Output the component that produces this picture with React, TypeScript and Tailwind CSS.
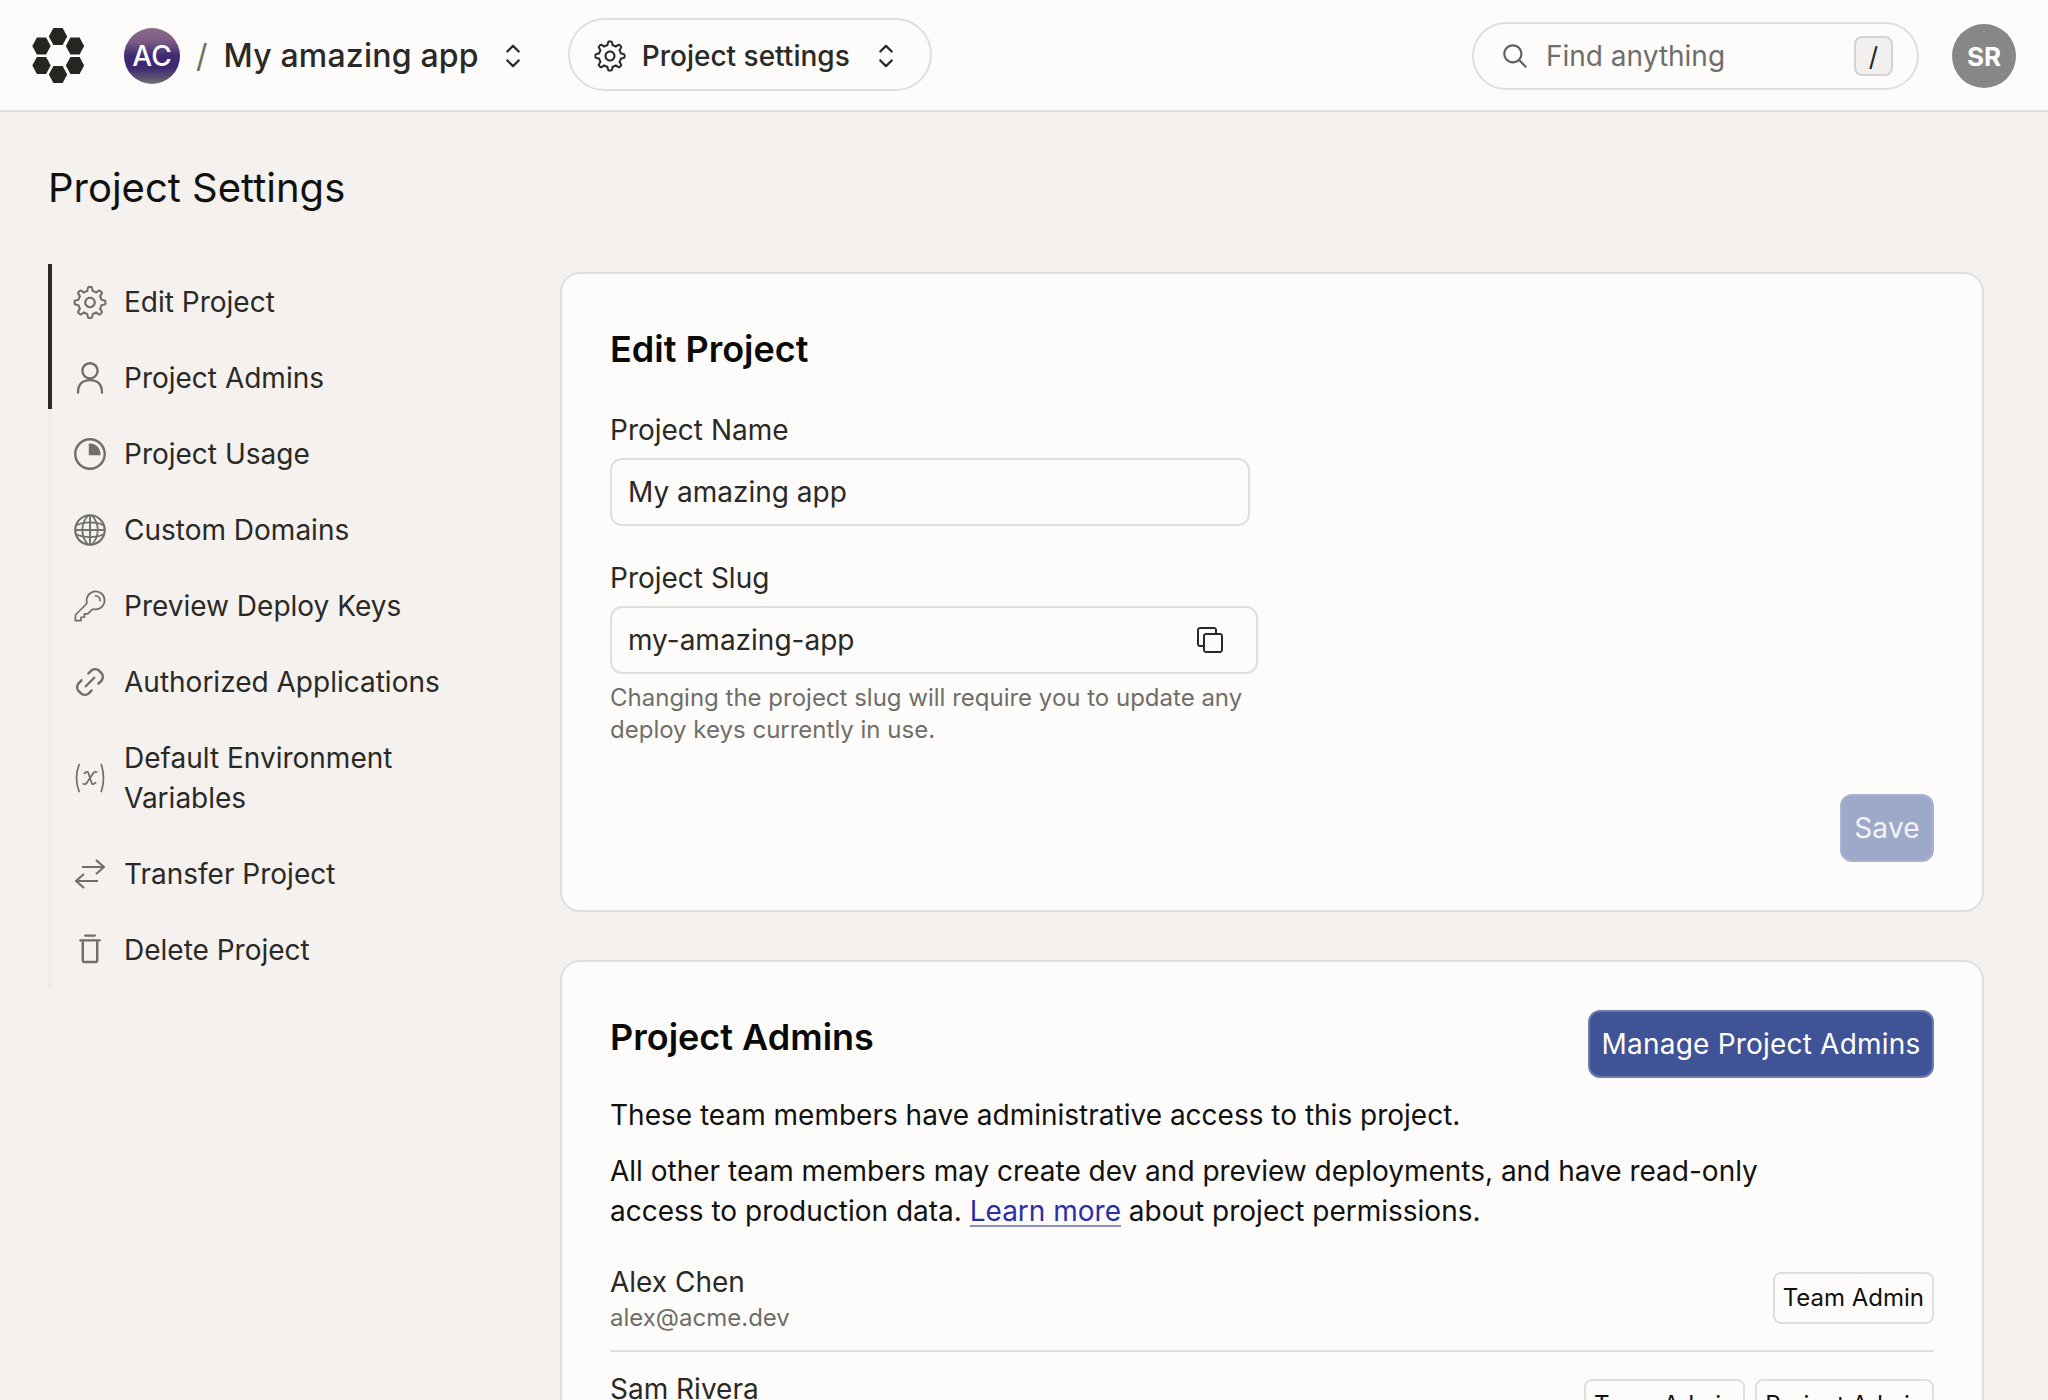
import React from "react";
import { RxGear, RxPerson, RxPieChart, RxGlobe, RxLink2, RxCaretSort, RxMagnifyingGlass, RxCopy, RxTrash } from "react-icons/rx";
import { HiOutlineVariable } from "react-icons/hi2";

function Logo() {
  const hex = [
    [58, 36.5],
    [41.5, 46],
    [75, 46],
    [41.5, 65.5],
    [75, 65.5],
    [58, 74.5],
  ];
  return (
    <svg width="52" height="56" viewBox="32 28 52 56" className="shrink-0">
      {hex.map(([x, y]) => (
        <polygon
          key={`${x}-${y}`}
          fill="#262522"
          points={`${x - 9.2},${y} ${x - 4.6},${y - 8.5} ${x + 4.6},${y - 8.5} ${x + 9.2},${y} ${x + 4.6},${y + 8.5} ${x - 4.6},${y + 8.5}`}
        />
      ))}
    </svg>
  );
}

function KeyIcon() {
  return (
    <svg width="40" height="40" viewBox="0 0 24 24" fill="none" stroke="currentColor" strokeWidth="1.15" strokeLinecap="round" strokeLinejoin="round">
      <path d="M15.75 5.25a3 3 0 0 1 3 3m3 0a6 6 0 0 1-7.029 5.912c-.563-.097-1.159.026-1.563.43L10.5 17.25H8.25v2.25H6v2.25H2.25v-2.818c0-.597.237-1.17.659-1.591l6.499-6.499c.404-.404.527-1 .43-1.563A6 6 0 1 1 21.75 8.25Z" />
    </svg>
  );
}

function TransferIcon() {
  return (
    <svg width="30" height="30" viewBox="0 0 30 30" fill="none" stroke="currentColor" strokeWidth="2.2">
      <path d="M7 8 H29 M21 1 L29 8 L21 15" />
      <path d="M23 22 H1 M9 15 L1 22 L9 29" />
    </svg>
  );
}

const items: { label: string; icon: React.ReactNode }[] = [
  { label: "Edit Project", icon: <RxGear size={37} /> },
  { label: "Project Admins", icon: <RxPerson size={36} /> },
  { label: "Project Usage", icon: <RxPieChart size={36} /> },
  { label: "Custom Domains", icon: <RxGlobe size={36} /> },
  { label: "Preview Deploy Keys", icon: <KeyIcon /> },
  { label: "Authorized Applications", icon: <RxLink2 size={36} /> },
  { label: "Default Environment Variables", icon: <HiOutlineVariable size={38} strokeWidth={1.15} /> },
  { label: "Transfer Project", icon: <TransferIcon /> },
  { label: "Delete Project", icon: <RxTrash size={36} /> },
];

function Sidebar() {
  return (
    <nav className="relative w-[452px] shrink-0 h-fit border-l-4 border-[#eeedea]">
      <div className="absolute -left-[4px] top-0 w-[4px] h-[145px] bg-[#2a2925]" />
      {items.map((it) => (
        <div key={it.label} className="flex items-center gap-[16px] pl-[20px] pr-[50px] py-[18px] text-[28px] leading-[40px] text-[#2a2925]">
          <span className="w-[36px] h-[36px] shrink-0 flex items-center justify-center text-[#6f6e69]">{it.icon}</span>
          <span>{it.label}</span>
        </div>
      ))}
    </nav>
  );
}

function Badge({ children }: { children: React.ReactNode }) {
  return (
    <span className="flex items-center h-[52px] px-[8px] rounded-[8px] border-2 border-[#e0dfdc] text-[24px] text-[#111110]">
      {children}
    </span>
  );
}

export default function App() {
  return (
    <div className="h-screen overflow-hidden bg-[#f4f1ef] [font-family:Inter,'Liberation_Sans',sans-serif]">
      <header className="h-[112px] flex items-center justify-between bg-[#fdfcfa] border-b-2 border-[#e0dfdc] pt-[2px] px-[32px]">
        <div className="flex items-center">
          <Logo />
          <div className="ml-[40px] w-[56px] h-[56px] rounded-full flex items-center justify-center text-white text-[28px] font-medium bg-[linear-gradient(180deg,#8c6b8a_0%,#7a5a85_25%,#3f2a72_50%,#3f2a72_72%,#6f6f6f_100%)]">
            AC
          </div>
          <span className="ml-[16px] text-[32px] text-[#6f6e69]">/</span>
          <span className="ml-[16px] text-[32px] tracking-[0.2px] font-medium text-[#2a2925]">My amazing app</span>
          <RxCaretSort size={38} className="ml-[15px] text-[#2a2925]" />
          <div className="ml-[36px] mb-[3px] h-[73px] w-[364px] rounded-full border-2 border-[#e0dfdc] flex items-center pl-[23px] pt-[2px] text-[#2a2925]">
            <RxGear size={34} />
            <span className="ml-[15px] text-[28px] font-medium">Project settings</span>
            <RxCaretSort size={38} className="ml-[17px]" />
          </div>
        </div>
        <div className="flex items-center gap-[33px]">
          <div className="w-[447px] h-[68px] rounded-full border-2 border-[#e0dfdc] flex items-center pl-[25px] pr-[24px]">
            <RxMagnifyingGlass size={32} className="text-[#5f5e5a]" />
            <span className="ml-[15px] text-[28px] text-[#6f6e69]">Find anything</span>
            <span className="ml-auto w-[39px] h-[40px] rounded-[8px] border-2 border-[#d4d3d0] bg-[#f1f0ee] flex items-center justify-center text-[26px] text-[#1f1e1c]">/</span>
          </div>
          <div className="w-[64px] h-[64px] rounded-full bg-[#878785] flex items-center justify-center text-white text-[26px] font-bold">SR</div>
        </div>
      </header>

      <main className="pl-[48px] pr-[64px] pt-[52px]">
        <h1 className="text-[40px] leading-[48px] text-[#111110] font-normal">Project Settings</h1>
        <div className="flex mt-[52px]">
          <Sidebar />
          <div className="ml-[60px] flex-1 mt-[8px]">
            <section className="h-[640px] rounded-[20px] border-2 border-[#e0dfdc] bg-[#fdfcfa] p-[48px] pt-[49px] flex flex-col">
              <h2 className="text-[36px] leading-[52px] font-semibold text-[#0a0a09]">Edit Project</h2>
              <label className="mt-[35px] text-[28px] leading-[40px] text-[#2a2925]">Project Name</label>
              <div className="mt-[8px] w-[640px] h-[68px] shrink-0 rounded-[12px] border-2 border-[#e0dfdc] flex items-center px-[16px] text-[28px] text-[#2a2925]">My amazing app</div>
              <label className="mt-[32px] text-[28px] leading-[40px] text-[#2a2925]">Project Slug</label>
              <div className="mt-[8px] w-[648px] h-[68px] shrink-0 rounded-[12px] border-2 border-[#e0dfdc] flex items-center justify-between pl-[16px] pr-[31px] text-[28px] text-[#2a2925]">
                my-amazing-app
                <RxCopy size={30} />
              </div>
              <p className="mt-[8px] w-[660px] text-[24px] leading-[32px] text-[#6f6e69]">Changing the project slug will require you to update any deploy keys currently in use.</p>
              <button className="mt-auto self-end h-[68px] w-[94px] rounded-[12px] border-2 border-[#a9b2d1] bg-[#9ea8c9] text-[28px] tracking-[0.2px] text-[#f2f3f8]">Save</button>
            </section>

            <section className="mt-[48px] rounded-[20px] border-2 border-[#e0dfdc] bg-[#fdfcfa] p-[48px]">
              <div className="flex items-start justify-between">
                <h2 className="mt-[1px] text-[36px] leading-[52px] font-semibold text-[#0a0a09]">Project Admins</h2>
                <button className="h-[68px] w-[346px] rounded-[12px] border-2 border-[#6d7db0] bg-[#3f5396] text-[28px] tracking-[0.2px] text-white">Manage Project Admins</button>
              </div>
              <p className="mt-[17px] text-[28px] leading-[40px] text-[#111110]">These team members have administrative access to this project.</p>
              <p className="mt-[16px] w-[1180px] text-[28px] leading-[40px] text-[#111110]">
                All other team members may create dev and preview deployments, and have read-only access to production data.{" "}
                <a className="text-[#2a2ea8] underline decoration-[#8892c8] decoration-2 underline-offset-[4px]">Learn more</a> about project permissions.
              </p>
              <div className="mt-[31px] flex items-center justify-between border-b-2 border-[#e0dfdc] pb-[16px]">
                <div>
                  <div className="text-[28px] leading-[40px] text-[#2a2925]">Alex Chen</div>
                  <div className="text-[24px] leading-[32px] text-[#6f6e69]">alex@acme.dev</div>
                </div>
                <div className="mb-[1px]">
                  <Badge>Team Admin</Badge>
                </div>
              </div>
              <div className="mt-[17px] flex items-center justify-between">
                <div>
                  <div className="text-[28px] leading-[40px] text-[#2a2925]">Sam Rivera</div>
                  <div className="text-[24px] leading-[32px] text-[#6f6e69]">sam@acme.dev</div>
                </div>
                <div className="flex gap-[10px] mb-[1px]">
                  <Badge>Team Admin</Badge>
                  <Badge>Project Admin</Badge>
                </div>
              </div>
            </section>
          </div>
        </div>
      </main>
    </div>
  );
}
